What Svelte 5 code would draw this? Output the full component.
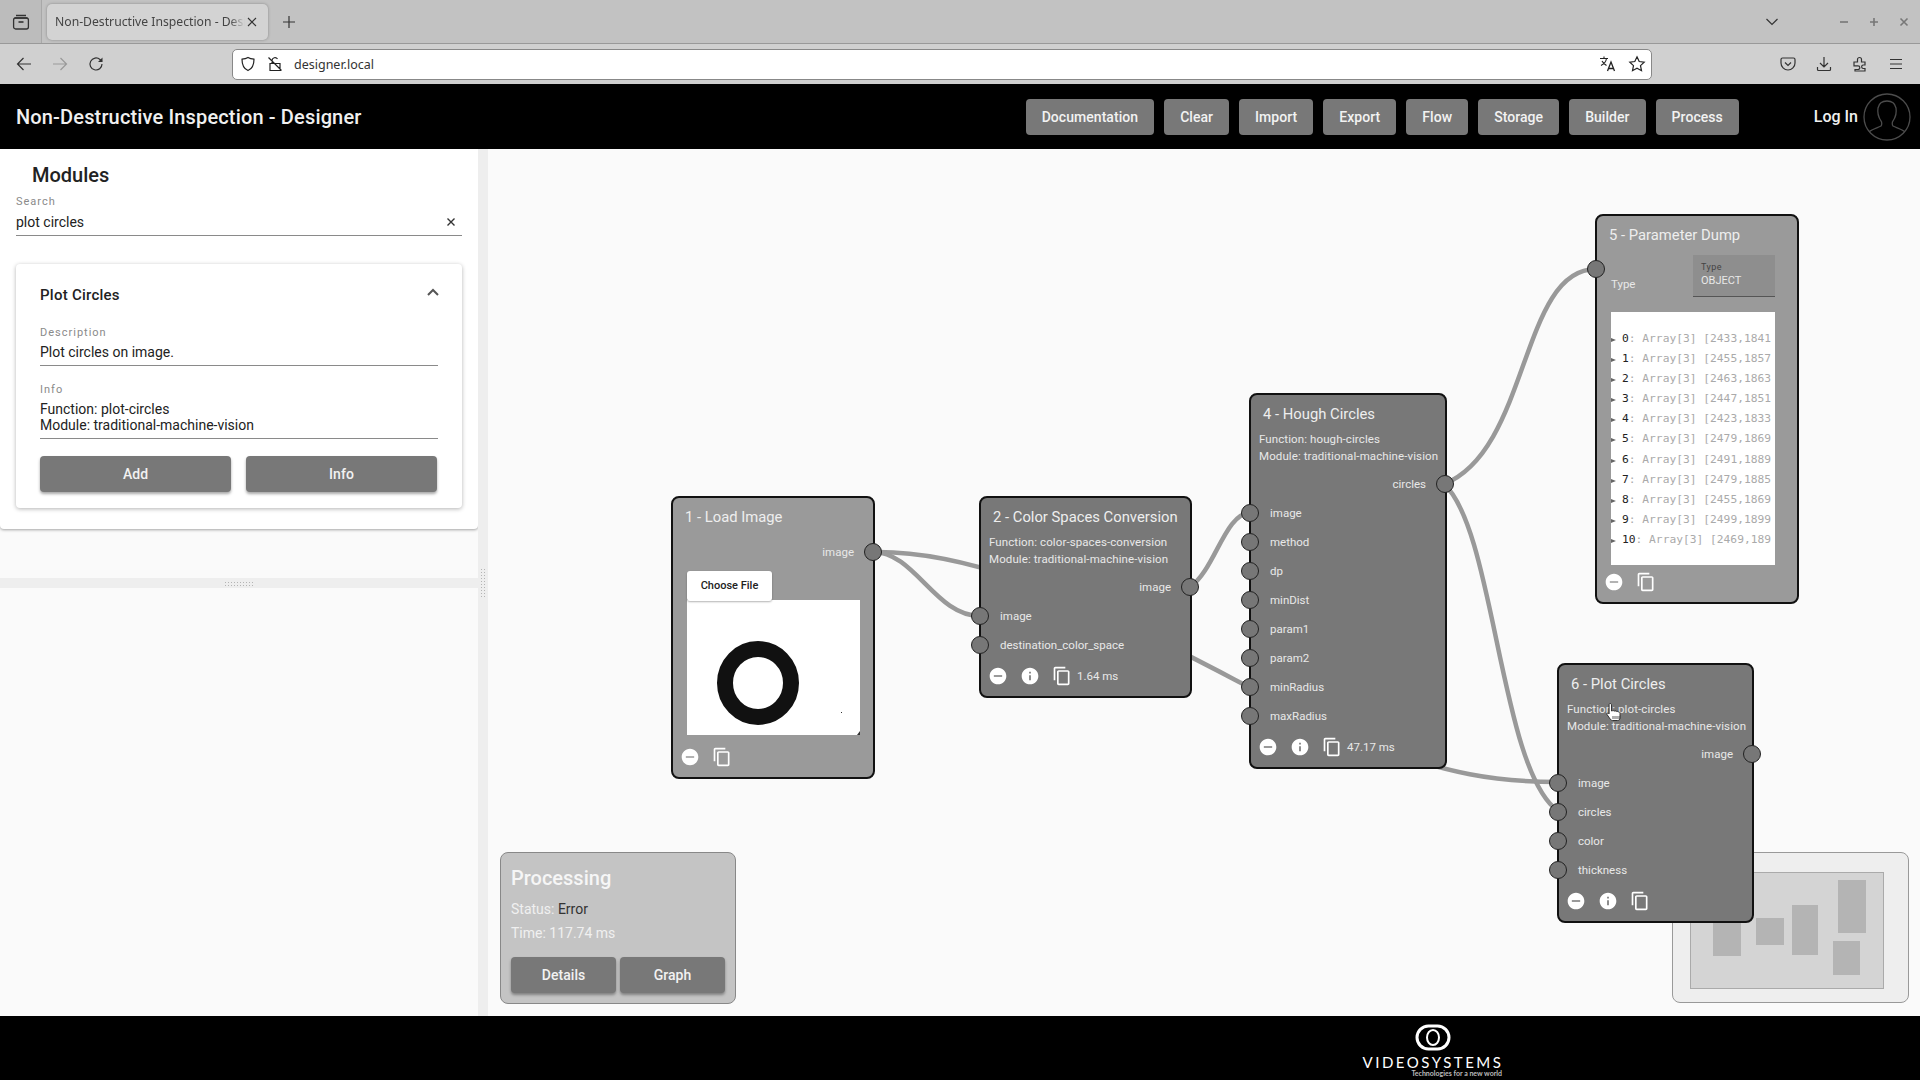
<script>
  // canvas origin in page pixels
  const OX = 488;
  const OY = 149;

  const navButtons = ['Documentation', 'Clear', 'Import', 'Export', 'Flow', 'Storage', 'Builder', 'Process'];

  const nodes = [
    { kind: 'load', title: '1 - Load Image', x: 671, y: 496, w: 204, light: true, outputs: ['image'], inputs: [] },
    {
      kind: 'fn', title: '2 - Color Spaces Conversion', x: 979, y: 496, w: 213,
      fn: 'color-spaces-conversion', outputs: ['image'], inputs: ['image', 'destination_color_space'], time: '1.64 ms'
    },
    {
      kind: 'fn', title: '4 - Hough Circles', x: 1249, y: 393, w: 198,
      fn: 'hough-circles', outputs: ['circles'],
      inputs: ['image', 'method', 'dp', 'minDist', 'param1', 'param2', 'minRadius', 'maxRadius'], time: '47.17 ms'
    },
    { kind: 'dump', title: '5 - Parameter Dump', x: 1595, y: 214, w: 204, light: true, outputs: [], inputs: [] },
    {
      kind: 'fn', title: '6 - Plot Circles', x: 1557, y: 663, w: 197,
      fn: 'plot-circles', outputs: ['image'], inputs: ['image', 'circles', 'color', 'thickness']
    }
  ];

  const dumpRows = [
    '[2433,1841', '[2455,1857', '[2463,1863', '[2447,1851', '[2423,1833', '[2479,1869',
    '[2491,1889', '[2479,1885', '[2455,1869', '[2499,1899', '[2469,189'
  ];

  const wires = [
    'M873 552 C 990 550, 1120 620, 1249 687',
    'M873 552 C 915 552, 935 616, 980 616',
    'M1190 587 C 1215 570, 1225 513, 1250 513',
    'M1444 484 C 1530 450, 1520 269, 1596 269',
    'M1444 484 C 1495 530, 1500 770, 1558 811',
    'M1380 750 C 1450 772, 1490 782, 1558 782'
  ];

  const miniBlocks = [
    { x: 1713, y: 912, w: 28, h: 44 },
    { x: 1756, y: 918, w: 28, h: 27 },
    { x: 1792, y: 905, w: 26, h: 50 },
    { x: 1838, y: 880, w: 28, h: 53 },
    { x: 1833, y: 941, w: 27, h: 34 }
  ];
</script>

<div class="browser">
  <div class="tabbar">
    <div class="tab-left">
      <svg width="18" height="18" viewBox="0 0 18 18" fill="none" stroke="#333" stroke-width="1.3">
        <path d="M4 2.500h10M2.500 5h13" />
        <rect x="1.600" y="5" width="14.800" height="11" rx="2" />
        <path d="M6.500 9h5" stroke-width="1.600" />
      </svg>
    </div>
    <div class="tab">
      <span class="tab-text">Non-Destructive Inspection - Designer</span>
      <svg width="12" height="12" viewBox="0 0 12 12" stroke="#333" stroke-width="1.1"><path d="M2 2l8 8M10 2l-8 8" /></svg>
    </div>
    <svg class="newtab" width="14" height="14" viewBox="0 0 14 14" stroke="#333" stroke-width="1.2"><path d="M7 1v12M1 7h12" /></svg>
    <div class="grow"></div>
    <svg class="tablist" width="14" height="10" viewBox="0 0 14 10" fill="none" stroke="#333" stroke-width="1.2"><path d="M1.500 2l5.500 5.500L12.500 2" /></svg>
    <div class="winctl">
      <svg width="10" height="10" viewBox="0 0 10 10" stroke="#777" stroke-width="1.6"><path d="M1 5h8" /></svg>
      <svg width="10" height="10" viewBox="0 0 10 10" stroke="#777" stroke-width="1.6"><path d="M1 5h8M5 1v8" /></svg>
      <svg width="10" height="10" viewBox="0 0 10 10" stroke="#777" stroke-width="1.6"><path d="M1.500 1.500l7 7M8.500 1.500l-7 7" /></svg>
    </div>
  </div>

  <div class="toolbar">
    <div class="nav-icons">
      <svg width="16" height="16" viewBox="0 0 16 16" fill="none" stroke="#333" stroke-width="1.2"><path d="M15 8H1.500M7.500 2L1.500 8l6 6" /></svg>
      <svg width="16" height="16" viewBox="0 0 16 16" fill="none" stroke="#999" stroke-width="1.2"><path d="M1 8h13.500M8.500 2l6 6-6 6" /></svg>
      <svg width="16" height="16" viewBox="0 0 16 16" fill="none" stroke="#333" stroke-width="1.2"><path d="M14 8a6 6 0 1 1-2-4.500L14 5.500" /><path d="M14.500 1.500v4.500h-4.500" fill="#333" stroke="none" /></svg>
    </div>
    <div class="urlbar">
      <svg width="16" height="16" viewBox="0 0 16 16" fill="none" stroke="#222" stroke-width="1.2"><path d="M8 1.500c2 1.200 3.500 1.500 6 1.700 0 5.500-1.500 9.500-6 11.300-4.500-1.800-6-5.800-6-11.300 2.500-.2 4-.5 6-1.700z" /></svg>
      <svg width="16" height="16" viewBox="0 0 16 16" fill="none" stroke="#222" stroke-width="1.200"><path d="M3 7.500h10V14.500H3zM5 7.500V4.500a3 3 0 0 1 5.500-1.500M1.500 1.500l13 13" /></svg>
      <span class="url">designer.local</span>
      <div class="grow"></div>
      <svg width="18" height="18" viewBox="0 0 18 18" fill="none" stroke="#222" stroke-width="1.100"><path d="M1 3.500h8M5 1.500v2M7.500 3.500c-.5 3-2.500 5.500-5.500 7M3 6c1 2 3 3.500 4.500 4.500" /><path d="M8.500 16l3.500-9 3.500 9M9.700 13.500h4.600" stroke-width="1.300" /></svg>
      <svg width="18" height="18" viewBox="0 0 18 18" fill="none" stroke="#222" stroke-width="1.200"><path d="M9 1.800l2.200 4.700 5 .6-3.700 3.500 1 5.100L9 13.200l-4.500 2.500 1-5.100L1.800 7.100l5-.6z" /></svg>
    </div>
    <div class="grow"></div>
    <div class="tool-icons">
      <svg width="16" height="16" viewBox="0 0 16 16" fill="none" stroke="#333" stroke-width="1.200"><path d="M2.500 2h11a1.500 1.500 0 0 1 1.500 1.500V7A7 7 0 0 1 1 7V3.500A1.500 1.500 0 0 1 2.500 2z" /><path d="M5 6.500l3 3 3-3" /></svg>
      <svg width="16" height="16" viewBox="0 0 16 16" fill="none" stroke="#333" stroke-width="1.200"><path d="M8 1v9.500M4 7l4 4 4-4M1.500 11v2.500a1 1 0 0 0 1 1h11a1 1 0 0 0 1-1V11" /></svg>
      <svg width="16" height="16" viewBox="0 0 16 16" fill="none" stroke="#333" stroke-width="1.200"><path d="M2 6h3.500V3.500a2 2 0 0 1 4 0V6h3.500v3h-2a1.800 1.800 0 0 0 0 3.500h2V15H3v-1.500h3a1.800 1.800 0 0 0 0-3.600H2z" /></svg>
      <svg width="16" height="16" viewBox="0 0 16 16" stroke="#333" stroke-width="1.200"><path d="M2 3.500h12M2 8h12M2 12.500h12" /></svg>
    </div>
  </div>
</div>

<header class="appbar">
  <h1>Non-Destructive Inspection - Designer</h1>
  <nav>
    {#each navButtons as label}
      <button class="btn">{label}</button>
    {/each}
  </nav>
  <div class="login">
    <span>Log In</span>
    <svg width="48" height="48" viewBox="0 0 48 48" fill="none" stroke="#4c4c4c" stroke-width="1.300">
      <circle cx="24" cy="24" r="23" />
      <path d="M6 39c3-3 8-4 12-6 1-1 1-4 0-5-2-3-4-7-3-13 1-5 5-7 9-7s8 2 9 7c1 6-1 10-3 13-1 1-1 4 0 5 4 2 9 3 12 6" />
    </svg>
  </div>
</header>

<main>
  <aside>
    <section class="panel">
      <h2>Modules</h2>
      <div class="field search">
        <span class="field-label">Search</span>
        <div class="search-row">
          <span>plot circles</span>
          <svg width="10" height="10" viewBox="0 0 10 10" stroke="#333" stroke-width="1.400"><path d="M1.500 1.500l7 7M8.500 1.500l-7 7" /></svg>
        </div>
      </div>
      <div class="card">
        <div class="card-head">
          <strong>Plot Circles</strong>
          <svg width="14" height="9" viewBox="0 0 14 9" fill="none" stroke="#555" stroke-width="2"><path d="M2 7l5-5 5 5" /></svg>
        </div>
        <div class="field">
          <span class="field-label">Description</span>
          <div class="field-value">Plot circles on image.</div>
        </div>
        <div class="field">
          <span class="field-label">Info</span>
          <div class="field-value">Function: plot-circles<br />Module: traditional-machine-vision</div>
        </div>
        <div class="card-actions">
          <button class="btn raised">Add</button>
          <button class="btn raised">Info</button>
        </div>
      </div>
    </section>
    <div class="hsplit"><span class="grip-h"></span></div>
  </aside>

  <div class="vsplit"><span class="grip-v"></span></div>

  <div class="canvas">
    <div class="minimap" style="left:{1672 - OX}px;top:{852 - OY}px">
      <div class="mini-inner"></div>
      {#each miniBlocks as b}
        <div class="mini-block" style="left:{b.x - 1672}px;top:{b.y - 852}px;width:{b.w}px;height:{b.h}px"></div>
      {/each}
    </div>

    <svg class="wires" width="1432" height="867" viewBox="{OX} {OY} 1432 867" fill="none" stroke="#999" stroke-width="4.500">
      {#each wires as d}
        <path {d} />
      {/each}
    </svg>

    {#each nodes as node}
      <div class="node" class:light={node.light} style="left:{node.x - OX}px;top:{node.y - OY}px;width:{node.w}px">
        <div class="node-title">{node.title}</div>

        {#if node.fn}
          <div class="node-info">
            <div>Function: {node.fn}</div>
            <div>Module: traditional-machine-vision</div>
          </div>
        {/if}

        {#each node.outputs as out}
          <div class="row output" class:first={!node.fn}>
            <span>{out}</span>
            <i class="port"></i>
          </div>
        {/each}

        {#if node.kind === 'load'}
          <button class="choose">Choose File</button>
          <svg class="preview" width="173" height="135" viewBox="0 0 173 135">
            <rect width="173" height="135" fill="#fff" />
            <ellipse cx="71" cy="83" rx="33" ry="34" fill="none" stroke="#111" stroke-width="16" />
            <rect x="154" y="112" width="1" height="1" fill="#333" />
            <path d="M173 135h-3l3-4z" fill="#333" />
          </svg>
        {/if}

        {#if node.kind === 'dump'}
          <div class="type-row">
            <i class="port"></i>
            <span class="type-label">Type</span>
            <div class="type-field">
              <small>Type</small>
              <span>OBJECT</span>
            </div>
          </div>
          <div class="dump">
            {#each dumpRows as row, i}
              <div class="dump-row"><b>{i}</b>: Array[3] {row}</div>
            {/each}
          </div>
        {/if}

        {#each node.inputs as input}
          <div class="row input">
            <i class="port"></i>
            <span>{input}</span>
          </div>
        {/each}

        <div class="actions">
          <svg width="20" height="20" viewBox="0 0 24 24" fill="#fff"><path d="M12 2C6.480 2 2 6.480 2 12s4.480 10 10 10 10-4.480 10-10S17.520 2 12 2zm5 11H7v-2h10v2z" /></svg>
          {#if node.fn}
            <svg width="20" height="20" viewBox="0 0 24 24" fill="#fff"><path d="M12 2C6.480 2 2 6.480 2 12s4.480 10 10 10 10-4.480 10-10S17.520 2 12 2zm1 15h-2v-6h2v6zm0-8h-2V7h2v2z" /></svg>
          {/if}
          <svg width="20" height="20" viewBox="0 0 24 24" fill="#fff"><path d="M16 1H4c-1.100 0-2 .9-2 2v14h2V3h12V1zm3 4H8c-1.100 0-2 .9-2 2v14c0 1.100.9 2 2 2h11c1.100 0 2-.9 2-2V7c0-1.100-.9-2-2-2zm0 16H8V7h11v14z" /></svg>
          {#if node.time}
            <span class="time">{node.time}</span>
          {/if}
        </div>
      </div>
    {/each}

    <div class="processing" style="left:{500 - OX}px;top:{852 - OY}px">
      <h3>Processing</h3>
      <p>Status: <em>Error</em></p>
      <p>Time: 117.74 ms</p>
      <div class="processing-actions">
        <button class="btn raised">Details</button>
        <button class="btn raised">Graph</button>
      </div>
    </div>

    <svg class="cursor" style="left:{1604 - OX}px;top:{702 - OY}px" width="20" height="20" viewBox="0 0 20 20">
      <path d="M6 1.500c1 0 1.500.7 1.500 1.500v6l1-.3c.8-.2 1.500 0 1.800.4.800-.4 1.600-.2 2 .3.800-.3 1.600 0 2 .6.800-.2 1.700.3 1.700 1.200V16c0 1.500-1 2.500-2.500 2.500H8.500c-1 0-1.700-.5-2.200-1.300L3 12.500c-.5-.9.600-1.900 1.500-1.200l.6.600V3c0-.9.300-1.500.9-1.500z" fill="#fff" stroke="#222" stroke-width=".9" />
      <path d="M9 14v3M11 14v3M13 14v3M15 14v3" stroke="#333" stroke-width=".8" />
    </svg>
  </div>
</main>

<footer>
  <div class="logo">
    <svg width="36" height="27" viewBox="0 0 36 27" fill="none" stroke="#fff">
      <rect x="2" y="2" width="32" height="23" rx="11.500" stroke-width="3" />
      <ellipse cx="18" cy="13.500" rx="6" ry="7.500" stroke-width="2" />
    </svg>
    <span class="logo-name">VIDEOSYSTEMS</span>
    <span class="logo-tag">Technologies for a new world</span>
  </div>
</footer>

<style>
  :global(body) {
    margin: 0;
    font-family: Roboto, "Liberation Sans", sans-serif;
    background: #fafafa;
    overflow: hidden;
  }

  .grow {
    flex: 1;
  }

  .browser {
    font-family: "Noto Sans", "Open Sans", sans-serif;
  }

  .tabbar {
    height: 43px;
    background: #c2c2c2;
    border-bottom: 1px solid #999;
    display: flex;
    align-items: center;
  }

  .tab-left {
    width: 42px;
    height: 43px;
    background: #bcbcbc;
    border-right: 1px solid #a8a8a8;
    box-sizing: border-box;
    display: flex;
    align-items: center;
    justify-content: center;
  }

  .tab {
    margin-left: 5px;
    width: 221px;
    height: 36px;
    box-sizing: border-box;
    padding: 0 10px 0 8px;
    background: #d3d3d3;
    border-radius: 5px;
    box-shadow: 0 0 3px rgba(0, 0, 0, 0.3);
    display: flex;
    align-items: center;
    justify-content: space-between;
    font-size: 12.200px;
    color: #444;
  }

  .tab-text {
    width: 190px;
    white-space: nowrap;
    overflow: hidden;
    mask-image: linear-gradient(to right, #000 92%, transparent);
  }

  .newtab {
    margin-left: 14px;
  }

  .tablist {
    margin-right: 60px;
  }

  .winctl {
    display: flex;
    gap: 20px;
    margin-right: 11px;
  }

  .toolbar {
    height: 40px;
    background: #d0d0d0;
    display: flex;
    align-items: center;
  }

  .nav-icons {
    display: flex;
    gap: 20px;
    margin-left: 16px;
  }

  .urlbar {
    margin-left: 128px;
    width: 1420px;
    height: 31px;
    box-sizing: border-box;
    background: #fff;
    border: 1px solid #888;
    border-radius: 5px;
    display: flex;
    align-items: center;
    gap: 11px;
    padding: 0 5px 0 7px;
  }

  .url {
    font-size: 12.500px;
    color: #333;
  }

  .tool-icons {
    display: flex;
    gap: 20px;
    margin-right: 16px;
  }

  .appbar {
    height: 65px;
    background: #000;
    color: #fff;
    display: flex;
    align-items: center;
    padding: 0 9px 0 16px;
  }

  h1 {
    margin: 0;
    font-size: 20px;
    font-weight: 500;
    letter-spacing: 0.15px;
    color: #f0f0f0;
  }

  nav {
    margin-left: auto;
    display: flex;
    gap: 10px;
  }

  .btn {
    border: none;
    height: 36px;
    padding: 0 16px;
    border-radius: 4px;
    background: #787878;
    color: #f2f2f2;
    font-family: inherit;
    font-size: 14px;
    font-weight: 500;
    letter-spacing: 0.05px;
  }

  .raised {
    box-shadow: 0 2px 3px rgba(0, 0, 0, 0.35);
  }

  .login {
    margin-left: 75px;
    display: flex;
    align-items: center;
    gap: 5px;
    font-size: 16px;
    font-weight: 500;
    color: #f0f0f0;
  }

  main {
    height: 867px;
    display: flex;
  }

  aside {
    width: 478px;
    flex: none;
  }

  .panel {
    height: 380px;
    box-sizing: border-box;
    background: #fff;
    border-radius: 0 0 4px 4px;
    box-shadow: 0 1px 3px rgba(0, 0, 0, 0.35);
    padding: 13px 16px 0;
    color: #222;
  }

  h2 {
    margin: 0 0 0 16px;
    font-size: 20px;
    font-weight: 500;
    line-height: 26px;
  }

  .field {
    display: flex;
    flex-direction: column;
  }

  .field-label {
    font-size: 11px;
    letter-spacing: 1px;
    color: #8a8a8a;
    line-height: 14px;
  }

  .search {
    margin-top: 7px;
    height: 41px;
  }

  .search-row {
    display: flex;
    align-items: center;
    justify-content: space-between;
    font-size: 14px;
    height: 27px;
    padding-right: 6px;
    box-sizing: border-box;
    border-bottom: 1px solid #8a8a8a;
  }

  .card {
    margin-top: 28px;
    height: 244px;
    box-sizing: border-box;
    border-radius: 4px;
    background: #fff;
    box-shadow: 0 1px 4px rgba(0, 0, 0, 0.3);
    padding: 0 24px;
  }

  .card-head {
    display: flex;
    align-items: center;
    justify-content: space-between;
    height: 62px;
    font-size: 15px;
    letter-spacing: 0.25px;
  }

  .card-head strong {
    font-weight: 500;
  }

  .card-head svg {
    margin-bottom: 6px;
    margin-right: -2px;
  }

  .card .field {
    margin-bottom: 17px;
  }

  .field-value {
    font-size: 14px;
    line-height: 16px;
    padding: 4px 0 5px;
    border-bottom: 1px solid #8a8a8a;
  }

  .card-actions {
    display: flex;
    gap: 15px;
    margin-top: 16px;
  }

  .card-actions .btn {
    width: 191px;
  }

  .hsplit {
    margin-top: 49px;
    height: 10px;
    background: #eee;
    display: flex;
    align-items: center;
    justify-content: center;
  }

  .grip-h {
    width: 30px;
    height: 5px;
    background-image: radial-gradient(#b4b4b4 1px, transparent 1px);
    background-size: 3px 3px;
  }

  .vsplit {
    width: 10px;
    flex: none;
    background: #eee;
    display: flex;
    align-items: center;
  }

  .grip-v {
    margin-left: 2px;
    width: 5px;
    height: 30px;
    background-image: radial-gradient(#b4b4b4 1px, transparent 1px);
    background-size: 3px 3px;
  }

  .canvas {
    flex: 1;
    position: relative;
    background: #fafafa;
    overflow: hidden;
  }

  .wires {
    position: absolute;
    left: 0;
    top: 0;
  }

  .node {
    position: absolute;
    box-sizing: border-box;
    border: 2px solid #111;
    border-radius: 8px;
    background: #787878;
    color: #e8e8e8;
    padding: 7px 8px 3.500px;
  }

  .node.light {
    background: #9a9a9a;
  }

  .node-title {
    font-size: 14.800px;
    line-height: 24px;
    padding-left: 4px;
    white-space: nowrap;
    color: #eee;
  }

  .node-info {
    margin-top: 4.500px;
    font-size: 11.500px;
    letter-spacing: 0.1px;
    line-height: 17px;
    white-space: nowrap;
    margin-bottom: 5px;
  }

  .row {
    position: relative;
    height: 29px;
    margin: 0 -8px;
    display: flex;
    align-items: center;
    font-size: 11.500px;
  }

  .row.first {
    margin-top: 8.500px;
  }

  .output {
    justify-content: flex-end;
    padding-right: 19px;
  }

  .input {
    padding-left: 19px;
  }

  .port {
    position: absolute;
    width: 18px;
    height: 18px;
    box-sizing: border-box;
    top: 5.500px;
    border: 1px solid #222;
    border-radius: 50%;
    background: #777;
    z-index: 2;
  }

  .output .port {
    right: -9px;
  }

  .input .port {
    left: -10px;
  }

  .actions {
    height: 33px;
    display: flex;
    align-items: center;
    gap: 12px;
    margin-left: -1px;
  }

  .time {
    font-size: 11.500px;
    margin-left: -7px;
  }

  .choose {
    display: block;
    margin: 4px 0 0 6px;
    width: 85px;
    height: 30px;
    border: none;
    border-radius: 3px;
    background: #fff;
    color: #222;
    font-family: inherit;
    font-size: 11px;
    font-weight: 500;
    box-shadow: 0 1px 2px rgba(0, 0, 0, 0.3);
    position: relative;
  }

  .preview {
    display: block;
    margin: -0.500px 0 5.500px 6px;
  }

  .type-row {
    position: relative;
    margin: 8px -8px 0;
    height: 42px;
    display: flex;
    align-items: flex-end;
    justify-content: space-between;
    padding: 0 22px 0 14px;
  }

  .type-row .port {
    left: -10px;
    top: 5px;
  }

  .type-label {
    font-size: 11.500px;
    line-height: 14px;
    padding: 0 0 6px;
  }

  .type-field {
    width: 82px;
    height: 42px;
    box-sizing: border-box;
    background: #8e8e8e;
    border-bottom: 1px solid #555;
    padding: 6px 8px 0;
    display: flex;
    flex-direction: column;
    font-size: 11px;
    line-height: 15px;
  }

  .type-field small {
    font-size: 9px;
    line-height: 12px;
    letter-spacing: 0.5px;
    color: #444;
  }

  .dump {
    margin: 15px 0 0 6px;
    width: 164px;
    height: 253px;
    box-sizing: border-box;
    padding-top: 17px;
    background: #fff;
    overflow: hidden;
    font-family: "DejaVu Sans Mono", monospace;
    font-size: 11.250px;
    color: #aaa;
  }

  .dump-row {
    position: relative;
    height: 20.100px;
    line-height: 20px;
    padding-left: 11px;
    white-space: nowrap;
  }

  .dump-row::before {
    content: '';
    position: absolute;
    left: 0;
    top: 9px;
    border-left: 5px solid #666;
    border-top: 2px solid transparent;
    border-bottom: 2px solid transparent;
  }

  .dump-row b {
    font-weight: 400;
    color: #222;
  }

  .processing {
    position: absolute;
    width: 236px;
    height: 152px;
    box-sizing: border-box;
    border: 1px solid #888;
    border-radius: 8px;
    background: #c4c4c4;
    padding: 12px 10px 0;
    color: #f0f0f0;
  }

  h3 {
    margin: 0 0 6px;
    font-size: 20px;
    font-weight: 500;
    line-height: 26px;
    color: #f6f6f6;
  }

  .processing p {
    margin: 0;
    font-size: 14px;
    line-height: 24px;
  }

  .processing em {
    font-style: normal;
    color: #333;
  }

  .processing-actions {
    display: flex;
    gap: 4px;
    margin-top: 12px;
  }

  .processing-actions .btn {
    width: 105px;
  }

  .minimap {
    position: absolute;
    width: 237px;
    height: 151px;
    box-sizing: border-box;
    border: 1px solid #999;
    border-radius: 8px;
    background: #eee;
  }

  .mini-inner {
    position: absolute;
    left: 17px;
    top: 19px;
    width: 194px;
    height: 117px;
    box-sizing: border-box;
    border: 1px solid #aaa;
    background: #d4d4d4;
  }

  .mini-block {
    position: absolute;
    background: #b4b4b4;
    margin: -1px;
  }

  .cursor {
    position: absolute;
    z-index: 5;
  }

  footer {
    height: 64px;
    background: #000;
    padding-left: 1364px;
    box-sizing: border-box;
  }

  .logo {
    width: 138px;
    display: flex;
    flex-direction: column;
    align-items: center;
    padding-top: 8px;
    color: #fff;
    font-family: Lato, sans-serif;
  }

  .logo-name {
    margin-top: 5px;
    font-size: 15px;
    line-height: 13px;
    letter-spacing: 2.500px;
    white-space: nowrap;
  }

  .logo-tag {
    align-self: flex-end;
    font-size: 7px;
    line-height: 8px;
    font-weight: 700;
    color: #bbb;
    white-space: nowrap;
  }
</style>
